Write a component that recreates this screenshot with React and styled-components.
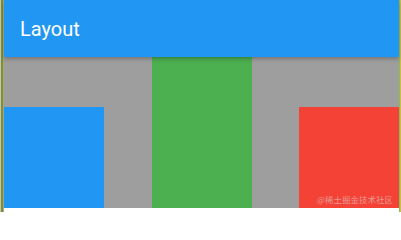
import styled, { createGlobalStyle } from "styled-components";

const GlobalStyle = createGlobalStyle`
  html, body {
    margin: 0;
    padding: 0;
    background: #ffffff;
  }
`;

const Frame = styled.div`
  display: flex;
  width: 401px;
  height: 212px;
  overflow: hidden;
`;

const Edge = styled.div`
  flex: none;
  width: ${(p) => p.$width}px;
  background: ${(p) => p.$bg};
`;

const Screen = styled.div`
  flex: 1;
  display: flex;
  flex-direction: column;
  background: #ffffff;
`;

const AppBar = styled.header`
  position: relative;
  z-index: 1;
  height: 57px;
  display: flex;
  align-items: center;
  padding-left: 16px;
  background: #2196f3;
  box-shadow: 0 2px 4px rgba(0, 0, 0, 0.25);
`;

const Title = styled.h1`
  margin: 0;
  font-family: Roboto, "Noto Sans", sans-serif;
  font-weight: 400;
  font-size: 20px;
  color: #ffffff;
`;

const Body = styled.main`
  position: relative;
  height: 151px;
  display: flex;
  justify-content: space-between;
  align-items: flex-end;
  background: #9e9e9e;
`;

const Block = styled.div`
  width: 100px;
  height: ${(p) => p.$height || "101px"};
  background: ${(p) => p.$color};
`;

const Watermark = styled.span`
  position: absolute;
  right: 6px;
  bottom: 3px;
  font-family: "Noto Sans CJK SC", sans-serif;
  font-size: 8.5px;
  color: rgba(225, 210, 210, 0.6);
`;

export default function App() {
  return (
    <>
      <GlobalStyle />
      <Frame>
        <Edge
          $width={4}
          $bg="linear-gradient(to right, #c4c9a8 0 1px, #7e8c44 1px 3px, #a3ab72 3px)"
        />
        <Screen>
          <AppBar>
            <Title>Layout</Title>
          </AppBar>
          <Body>
            <Block $color="#2196f3" />
            <Block $color="#4caf50" $height="100%" />
            <Block $color="#f44336" />
            <Watermark>@稀土掘金技术社区</Watermark>
          </Body>
        </Screen>
        <Edge
          $width={2}
          $bg="linear-gradient(to right, #8fba5c 0 1px, #c9c23e 1px)"
        />
      </Frame>
    </>
  );
}
